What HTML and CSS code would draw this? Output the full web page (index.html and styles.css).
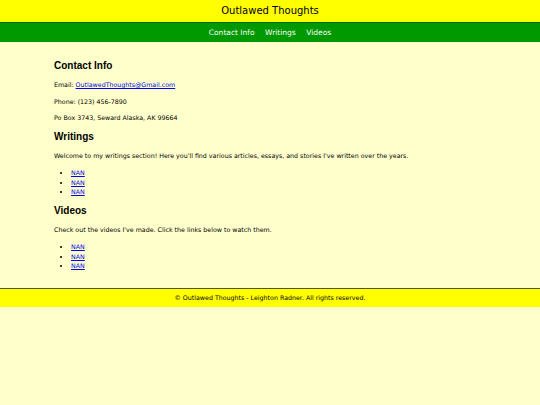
FILE: index.html
```html
<!DOCTYPE html>
<html lang="en">
<head>
<meta charset="utf-8">
<title>Outlawed Thoughts</title>
<link rel="stylesheet" href="styles.css">
</head>
<body>
<header class="site-header">
  <h1 class="site-title">Outlawed Thoughts</h1>
</header>
<nav class="site-nav">
  <a href="#contact">Contact Info</a>
  <a href="#writings">Writings</a>
  <a href="#videos">Videos</a>
</nav>
<main class="content">
  <section id="contact">
    <h2>Contact Info</h2>
    <p>Email: <a href="mailto:OutlawedThoughts@Gmail.com">OutlawedThoughts@Gmail.com</a></p>
    <p>Phone: (123) 456-7890</p>
    <p>Po Box 3743, Seward Alaska, AK 99664</p>
  </section>
  <section id="writings">
    <h2>Writings</h2>
    <p>Welcome to my writings section! Here you'll find various articles, essays, and stories I've written over the years.</p>
    <ul>
      <li><a href="#">NAN</a></li>
      <li><a href="#">NAN</a></li>
      <li><a href="#">NAN</a></li>
    </ul>
  </section>
  <section id="videos">
    <h2>Videos</h2>
    <p>Check out the videos I've made. Click the links below to watch them.</p>
    <ul>
      <li><a href="#">NAN</a></li>
      <li><a href="#">NAN</a></li>
      <li><a href="#">NAN</a></li>
    </ul>
  </section>
</main>
<footer class="site-footer">
  <p>&copy; Outlawed Thoughts - Leighton Radner. All rights reserved.</p>
</footer>
</body>
</html>
```
FILE: styles.css
```css
html, body {
  margin: 0;
  padding: 0;
}
body {
  background: #ffffcc;
  font-family: "Comic Sans MS", "DejaVu Sans", sans-serif;
  font-size: 6.3px;
  color: #000;
}
.site-header {
  background: #ffff00;
  height: 21.5px;
  display: flex;
  align-items: center;
  justify-content: center;
}
.site-title {
  margin: 1px 0 0;
  font-size: 10px;
  font-weight: normal;
  line-height: 1;
}
.site-nav {
  background: #009900;
  border-top: 1.5px solid #006600;
  height: 17.5px;
  padding-top: 1.5px;
  display: flex;
  align-items: center;
  justify-content: center;
  gap: 10.5px;
  font-size: 7.5px;
}
.site-nav a {
  color: #fff;
  text-decoration: none;
}
.content {
  padding: 10.5px 54px 9px;
}
.content h2 {
  font-family: "Liberation Sans", Arial, sans-serif;
  font-size: 10px;
  line-height: 12px;
  font-weight: bold;
  margin: 8px 0;
}
.content p {
  line-height: 9.5px;
  margin: 7px 0;
}
.content ul {
  margin: 8px 0;
  padding-left: 17px;
}
.content li {
  line-height: 9.5px;
}
.content a {
  color: #0000ee;
}
.site-footer {
  background: #ffff00;
  border-top: 1.5px solid #555522;
  height: 18.5px;
  display: flex;
  align-items: center;
  justify-content: center;
}
.site-footer p {
  margin: 0;
}
```
